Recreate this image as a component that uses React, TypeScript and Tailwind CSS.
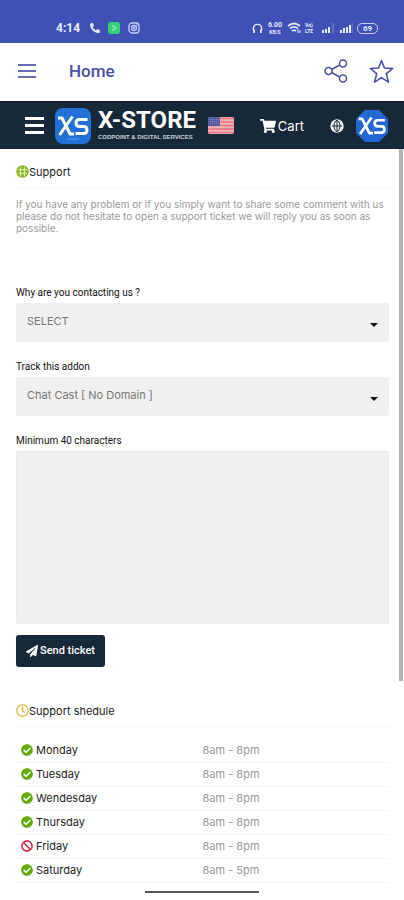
import type { ReactNode } from "react";
import {
  FaBan,
  FaCheckCircle,
  FaPaperPlane,
  FaPhoneAlt,
  FaRegClock,
  FaShoppingCart,
} from "react-icons/fa";

const days = [
  { name: "Monday", hours: "8am - 8pm", open: true },
  { name: "Tuesday", hours: "8am - 8pm", open: true },
  { name: "Wendesday", hours: "8am - 8pm", open: true },
  { name: "Thursday", hours: "8am - 8pm", open: true },
  { name: "Friday", hours: "8am - 8pm", open: false },
  { name: "Saturday", hours: "8am - 5pm", open: true },
];

function GlobeIcon() {
  return (
    <svg viewBox="0 0 14 14" className="size-[14px]" aria-hidden="true">
      <circle cx="7" cy="7" r="6.700" fill="#f1f4f6" />
      <g fill="none" stroke="#172838" strokeWidth="1">
        <ellipse cx="7" cy="7" rx="3" ry="5.500" />
        <path d="M7 1.500v11M2 7h10" />
      </g>
    </svg>
  );
}

function SupportIcon() {
  return (
    <svg viewBox="0 0 14 14" className="size-[13px]" aria-hidden="true">
      <circle cx="7" cy="7" r="6.700" fill="#84b81c" />
      <g fill="none" stroke="#e3f0c0" strokeWidth="1.100">
        <path d="M5 2v10M9 2v10M2 5h10M2 9h10" />
      </g>
    </svg>
  );
}

function XsMark() {
  return (
    <g fill="none" stroke="#fff" strokeWidth="3" strokeLinejoin="round">
      <path d="M3 10h4l8 16h4" />
      <path d="M17.500 8.500L4.500 27" />
      <path d="M32.500 11.500h-8q-3.500 0-3.500 3.500t3.500 3.500h4q3.500 0 3.500 3.500t-3.500 3.500h-8" />
    </g>
  );
}

function StatusBar() {
  return (
    <div className="flex h-[43px] items-end justify-between bg-[#3f51b5] pr-[26px] pb-[7px] pl-14 text-[#e8ebff]">
      <div className="flex h-4 items-center gap-2">
        <span className="w-6 font-[Roboto,sans-serif] text-[12px] leading-4 font-bold">4:14</span>
        <FaPhoneAlt className="ml-[2px] size-[10px]" />
        <span className="flex size-3 items-center justify-center rounded-[3px] bg-[#35ce78]">
          <svg viewBox="0 0 12 12" className="size-3" fill="none" stroke="#9bf0bd" strokeWidth="1.300" aria-hidden="true">
            <path d="M4 3.500l4 2.500-4 2.500" />
          </svg>
        </span>
        <svg viewBox="0 0 12 12" className="size-3" fill="none" stroke="#c5cdf8" strokeWidth="1.300" aria-hidden="true">
          <rect x="1" y="1" width="10" height="10" rx="3" />
          <circle cx="6" cy="6" r="2.500" />
          <circle cx="6" cy="6" r=".5" />
          <path d="M8.500 3h1" />
        </svg>
      </div>
      <div className="flex h-4 items-center gap-1">
        <svg viewBox="0 0 12 12" className="size-[11px]" fill="none" stroke="currentColor" strokeWidth="1.500" aria-hidden="true">
          <path d="M1.500 8V6a4.500 4.500 0 0 1 9 0v2" />
          <path d="M2.300 7v4M9.700 7v4" strokeWidth="2" />
        </svg>
        <span className="flex w-4 flex-col items-center font-[Roboto,sans-serif] font-bold">
          <span className="text-[7px] leading-[8px]">6.00</span>
          <span className="text-[5px] leading-[6px]">KB/S</span>
        </span>
        <svg viewBox="0 0 14 12" className="h-3 w-[14px]" fill="none" stroke="currentColor" strokeWidth="1.700" aria-hidden="true">
          <path d="M1 4q6-5 12 0M3 6.500q4-3.200 8 0M5 9q2-1.500 4 0" />
          <path d="M11 7v4M13 8v3" strokeWidth="1" />
        </svg>
        <span className="flex w-3 flex-col font-[Roboto,sans-serif] text-[5px] leading-[6px] font-bold">
          <span>Vo)</span>
          <span>LTE</span>
        </span>
        <svg viewBox="0 0 14 12" className="h-3 w-[14px]" fill="none" stroke="currentColor" strokeWidth="2" aria-hidden="true">
          <path d="M2 11V8M5 11V7M8 11V5" />
          <path d="M12 11V1" opacity=".2" />
        </svg>
        <svg viewBox="0 0 14 12" className="h-3 w-[14px]" fill="none" stroke="currentColor" strokeWidth="2" aria-hidden="true">
          <path d="M2 11V8M5 11V6M8 11V5M11 11V3" />
          <path d="M13.500 11V1" opacity=".2" />
        </svg>
        <span className="flex h-[11px] w-[21px] items-center justify-center rounded-[5px] border border-[#c5cdf8] font-[Roboto,sans-serif] text-[8px] leading-[9px] font-bold">
          69
        </span>
      </div>
    </div>
  );
}

function AppBar() {
  return (
    <header className="flex h-[58px] items-center bg-white pr-[10px] pb-[2px] pl-[18px] text-[#4a50a8]">
      <button type="button" aria-label="Menu" className="flex w-[18px] flex-col gap-1">
        <span className="h-[2px] bg-[#686bb5]" />
        <span className="h-[2px] bg-[#686bb5]" />
        <span className="h-[2px] bg-[#686bb5]" />
      </button>
      <h1 className="ml-[33px] flex-1 font-[Roboto,sans-serif] text-[17px] leading-6 font-medium">Home</h1>
      <button type="button" aria-label="Share">
        <svg viewBox="0 0 24 24" className="size-6" fill="none" stroke="currentColor" strokeWidth="1.500" aria-hidden="true">
          <circle cx="19" cy="4.500" r="3.500" />
          <circle cx="4.500" cy="12" r="3.500" />
          <circle cx="19" cy="19.500" r="3.500" />
          <path d="M7.700 10.500l8-4.500M7.700 13.500l8 4.500" />
        </svg>
      </button>
      <button type="button" aria-label="Favourite" className="ml-[21px]">
        <svg viewBox="0 0 24 24" className="size-[25px]" fill="none" stroke="currentColor" strokeWidth="1.500" strokeLinejoin="round" aria-hidden="true">
          <path d="M12 1.500l2.800 7.200 8 .4-6.200 5 2.100 8.100L12 17.800l-6.700 4.400 2.100-8.100-6.200-5 8-.4z" />
        </svg>
      </button>
    </header>
  );
}

function SiteNav() {
  return (
    <nav className="flex h-12 items-center border-t border-[#0c1823] bg-[#172838] pr-4 pl-[25px] text-white">
      <button type="button" aria-label="Site menu" className="flex w-[19px] shrink-0 flex-col gap-1">
        <span className="h-[3px] bg-white" />
        <span className="h-[3px] bg-white" />
        <span className="h-[3px] bg-white" />
      </button>
      <a href="#home" className="ml-[11px] flex items-center gap-[7px]">
        <svg viewBox="0 0 36 36" className="size-9 shrink-0" aria-hidden="true">
          <rect width="36" height="36" rx="8" fill="#2370d6" />
          <XsMark />
          <path d="M12 31h12" stroke="#65a3ee" />
        </svg>
        <span className="flex w-[98px] flex-col whitespace-nowrap pb-1">
          <span className="font-[Roboto,sans-serif] text-[24px] leading-[27px] font-bold">X-STORE</span>
          <span className="font-['Liberation_Sans',sans-serif] text-[6px] leading-[6px] font-bold text-[#cbd3da]">CODPOINT &amp; DIGITAL SERVICES</span>
        </span>
      </a>
      <button type="button" aria-label="Language: English" className="ml-3 shrink-0">
        <svg viewBox="0 0 26 17" className="h-[17px] w-[26px]" aria-hidden="true">
          <rect width="26" height="17" rx="2" fill="#f2b4b8" />
          <path d="M0 1.500h26M0 5h26M0 8.500h26M0 12h26M0 15.500h26" stroke="#e5757e" strokeWidth="1.700" />
          <rect width="12" height="9" rx="1" fill="#555a9f" />
          <path d="M2 2.500h9M2 4.500h9M2 6.500h9" stroke="#8d91c5" strokeWidth=".8" strokeDasharray="1 1" />
        </svg>
      </button>
      <span className="flex-1" />
      <a href="#cart" className="flex items-center gap-[2px] font-[Inter,sans-serif] text-[13px] leading-5">
        <FaShoppingCart className="size-4" />
        Cart
      </a>
      <button type="button" aria-label="Region" className="ml-[26px]">
        <GlobeIcon />
      </button>
      <a href="#account" aria-label="Account" className="ml-3">
        <svg viewBox="0 0 36 36" className="size-8" aria-hidden="true">
          <path d="M10 0h16l10 10v16L26 36H10L0 26V10z" fill="#2467d2" />
          <XsMark />
        </svg>
      </a>
    </nav>
  );
}

function FieldLabel({ id, children }: { id: string; children: string }) {
  return (
    <label htmlFor={id} className="block font-[Roboto,sans-serif] text-[10px] leading-4 text-[#111]">
      {children}
    </label>
  );
}

function SelectField({ id, label, value }: { id: string; label: string; value: string }) {
  return (
    <div className="mb-[17px]">
      <FieldLabel id={id}>{label}</FieldLabel>
      <div className="relative mt-[2px]">
        <select id={id} className="block h-[39px] w-full appearance-none rounded-[2px] bg-[#f0f0f0] pr-8 pb-[2px] pl-[11px] text-[11px] text-[#777]">
          <option>{value}</option>
        </select>
        <svg viewBox="0 0 8 4" className="pointer-events-none absolute right-[11px] bottom-[15px] h-1 w-2" aria-hidden="true">
          <path d="M0 0h8L4 4z" fill="#111" />
        </svg>
      </div>
    </div>
  );
}

function SectionTitle({ icon, children }: { icon: ReactNode; children: string }) {
  return (
    <h2 className="flex h-8 items-center border-b border-[#f5f5f5] text-[11px] leading-4 text-[#222]">
      {icon}
      {children}
    </h2>
  );
}

export default function App() {
  return (
    <div className="bg-white font-[Inter,sans-serif]">
      <StatusBar />
      <AppBar />
      <SiteNav />
      <div className="relative">
        <div className="absolute top-0 right-px h-[532px] w-1 bg-[#b5b5b5]" />
        <main className="pt-[7px] pr-[15px] pl-4">
          <SectionTitle icon={<SupportIcon />}>Support</SectionTitle>
          <p className="mt-[10px] text-[10px] leading-3 text-[#999]">
            If you have any problem or if you simply want to share some comment with us please do not hesitate to open a support ticket we will reply you as soon as possible.
          </p>
          <form className="mt-[51px]" onSubmit={(event) => event.preventDefault()}>
            <SelectField id="reason" label="Why are you contacting us ?" value="SELECT" />
            <SelectField id="addon" label="Track this addon" value="Chat Cast [ No Domain ]" />
            <FieldLabel id="message">Minimum 40 characters</FieldLabel>
            <textarea id="message" className="mt-[2px] block h-[173px] w-full resize-none border border-[#ebebeb] bg-[#f0f0f0] p-2 text-[11px]" />
            <button type="submit" className="mt-[11px] flex h-8 items-center gap-[2px] rounded-[3px] bg-[#172838] px-[10px] font-[Roboto,sans-serif] text-[11px] leading-4 font-medium text-white">
              <FaPaperPlane className="size-3" />
              Send ticket
            </button>
          </form>
          <section className="mt-7">
            <SectionTitle icon={<FaRegClock className="size-[13px] text-[#e2b537]" />}>Support shedule</SectionTitle>
            <table className="mt-[11px] w-full table-fixed text-left text-[11px] leading-4">
              <tbody>
                {days.map((day) => (
                  <tr key={day.name} className="h-6 border-b border-[#f3f3f3]">
                    <th scope="row" className="w-1/2 p-0 pl-[5px] font-normal text-[#222]">
                      <span className="flex items-center gap-[3px]">
                        {day.open ? (
                          <FaCheckCircle className="size-3 text-[#65a80c]" aria-label="Open" />
                        ) : (
                          <FaBan className="size-3 text-[#dc2440]" aria-label="Closed" />
                        )}
                        {day.name}
                      </span>
                    </th>
                    <td className="p-0 text-[#999]">{day.hours}</td>
                  </tr>
                ))}
              </tbody>
            </table>
          </section>
        </main>
      </div>
      <div className="mx-auto mt-2 mb-[7px] h-[2px] w-[114px] bg-[#555]" />
    </div>
  );
}
